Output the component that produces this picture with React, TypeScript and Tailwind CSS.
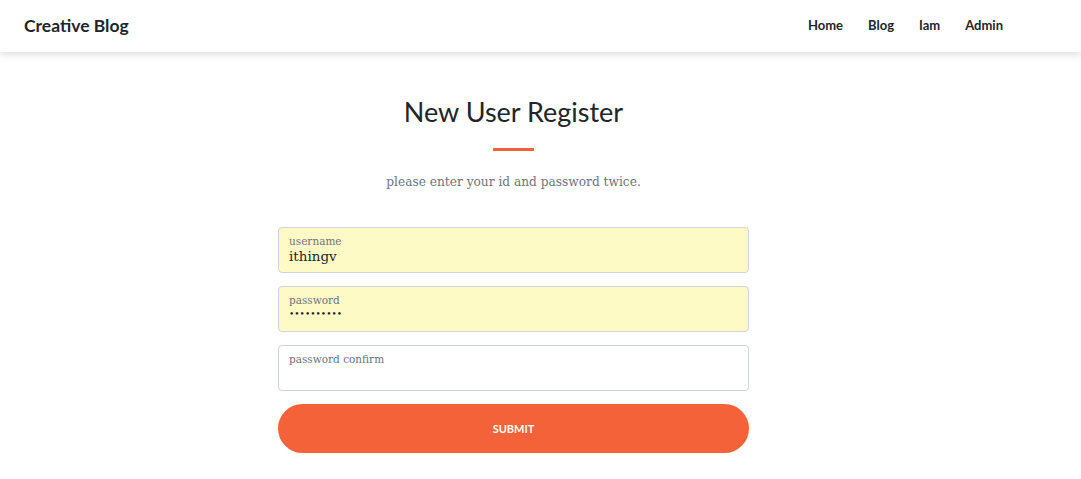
import { useState } from 'react';

const NAV_LINKS = ['Home', 'Blog', 'Iam', 'Admin'];

const SANS = { fontFamily: 'Lato, "Open Sans", sans-serif' };
const SERIF = { fontFamily: '"DejaVu Serif", "Liberation Serif", serif' };

interface FieldProps {
  label: string;
  value: string;
  filled?: boolean;
  password?: boolean;
}

function Field({ label, value, filled, password }: FieldProps) {
  return (
    <div
      className={`h-[46px] rounded border border-[#ced4da] px-[10px] pt-[7px] ${filled ? 'bg-[#fefac6]' : 'bg-white'}`}
      style={SERIF}
    >
      <div className="text-[10.5px] leading-[13px] text-[#6c757d]">{label}</div>
      {password ? (
        <div className="text-[9px] leading-[14px] text-[#212529]">{'•'.repeat(10)}</div>
      ) : (
        <div className="text-[13.5px] leading-[17px] text-[#212529]">{value}</div>
      )}
    </div>
  );
}

export default function App() {
  const [username] = useState('ithingv');

  return (
    <div className="min-h-[479px] bg-white">
      {/* Navbar */}
      <nav className="relative z-10 flex h-[52px] items-center justify-between bg-white pl-6 pr-[78px] shadow-[0_2px_8px_rgba(0,0,0,0.15)]" style={SANS}>
        <span className="text-[17.5px] font-bold text-[#212529]">Creative Blog</span>
        <ul className="flex gap-[25px]">
          {NAV_LINKS.map((link) => (
            <li key={link} className="text-[13px] font-bold text-[#212529]">
              {link}
            </li>
          ))}
        </ul>
      </nav>

      {/* Register form */}
      <section className="ml-[278px] w-[471px] pt-[38px]">
        <h1 className="text-center text-[27px] leading-[44px] text-[#212529]" style={SANS}>
          New User Register
        </h1>
        <div className="mx-auto mt-[14px] h-[3px] w-[41px] bg-[#f4623a]" />
        <p className="mt-[22px] text-center text-[12.2px] text-[#6c757d]" style={SERIF}>
          please enter your id and password twice.
        </p>

        <form className="mt-[36px] flex flex-col gap-[13px]">
          <Field label="username" value={username} filled />
          <Field label="password" value="" filled password />
          <Field label="password confirm" value="" />
          <button
            type="button"
            className="h-[49px] rounded-full bg-[#f4623a] text-[11px] font-bold text-white"
            style={SANS}
          >
            SUBMIT
          </button>
        </form>
      </section>
    </div>
  );
}
